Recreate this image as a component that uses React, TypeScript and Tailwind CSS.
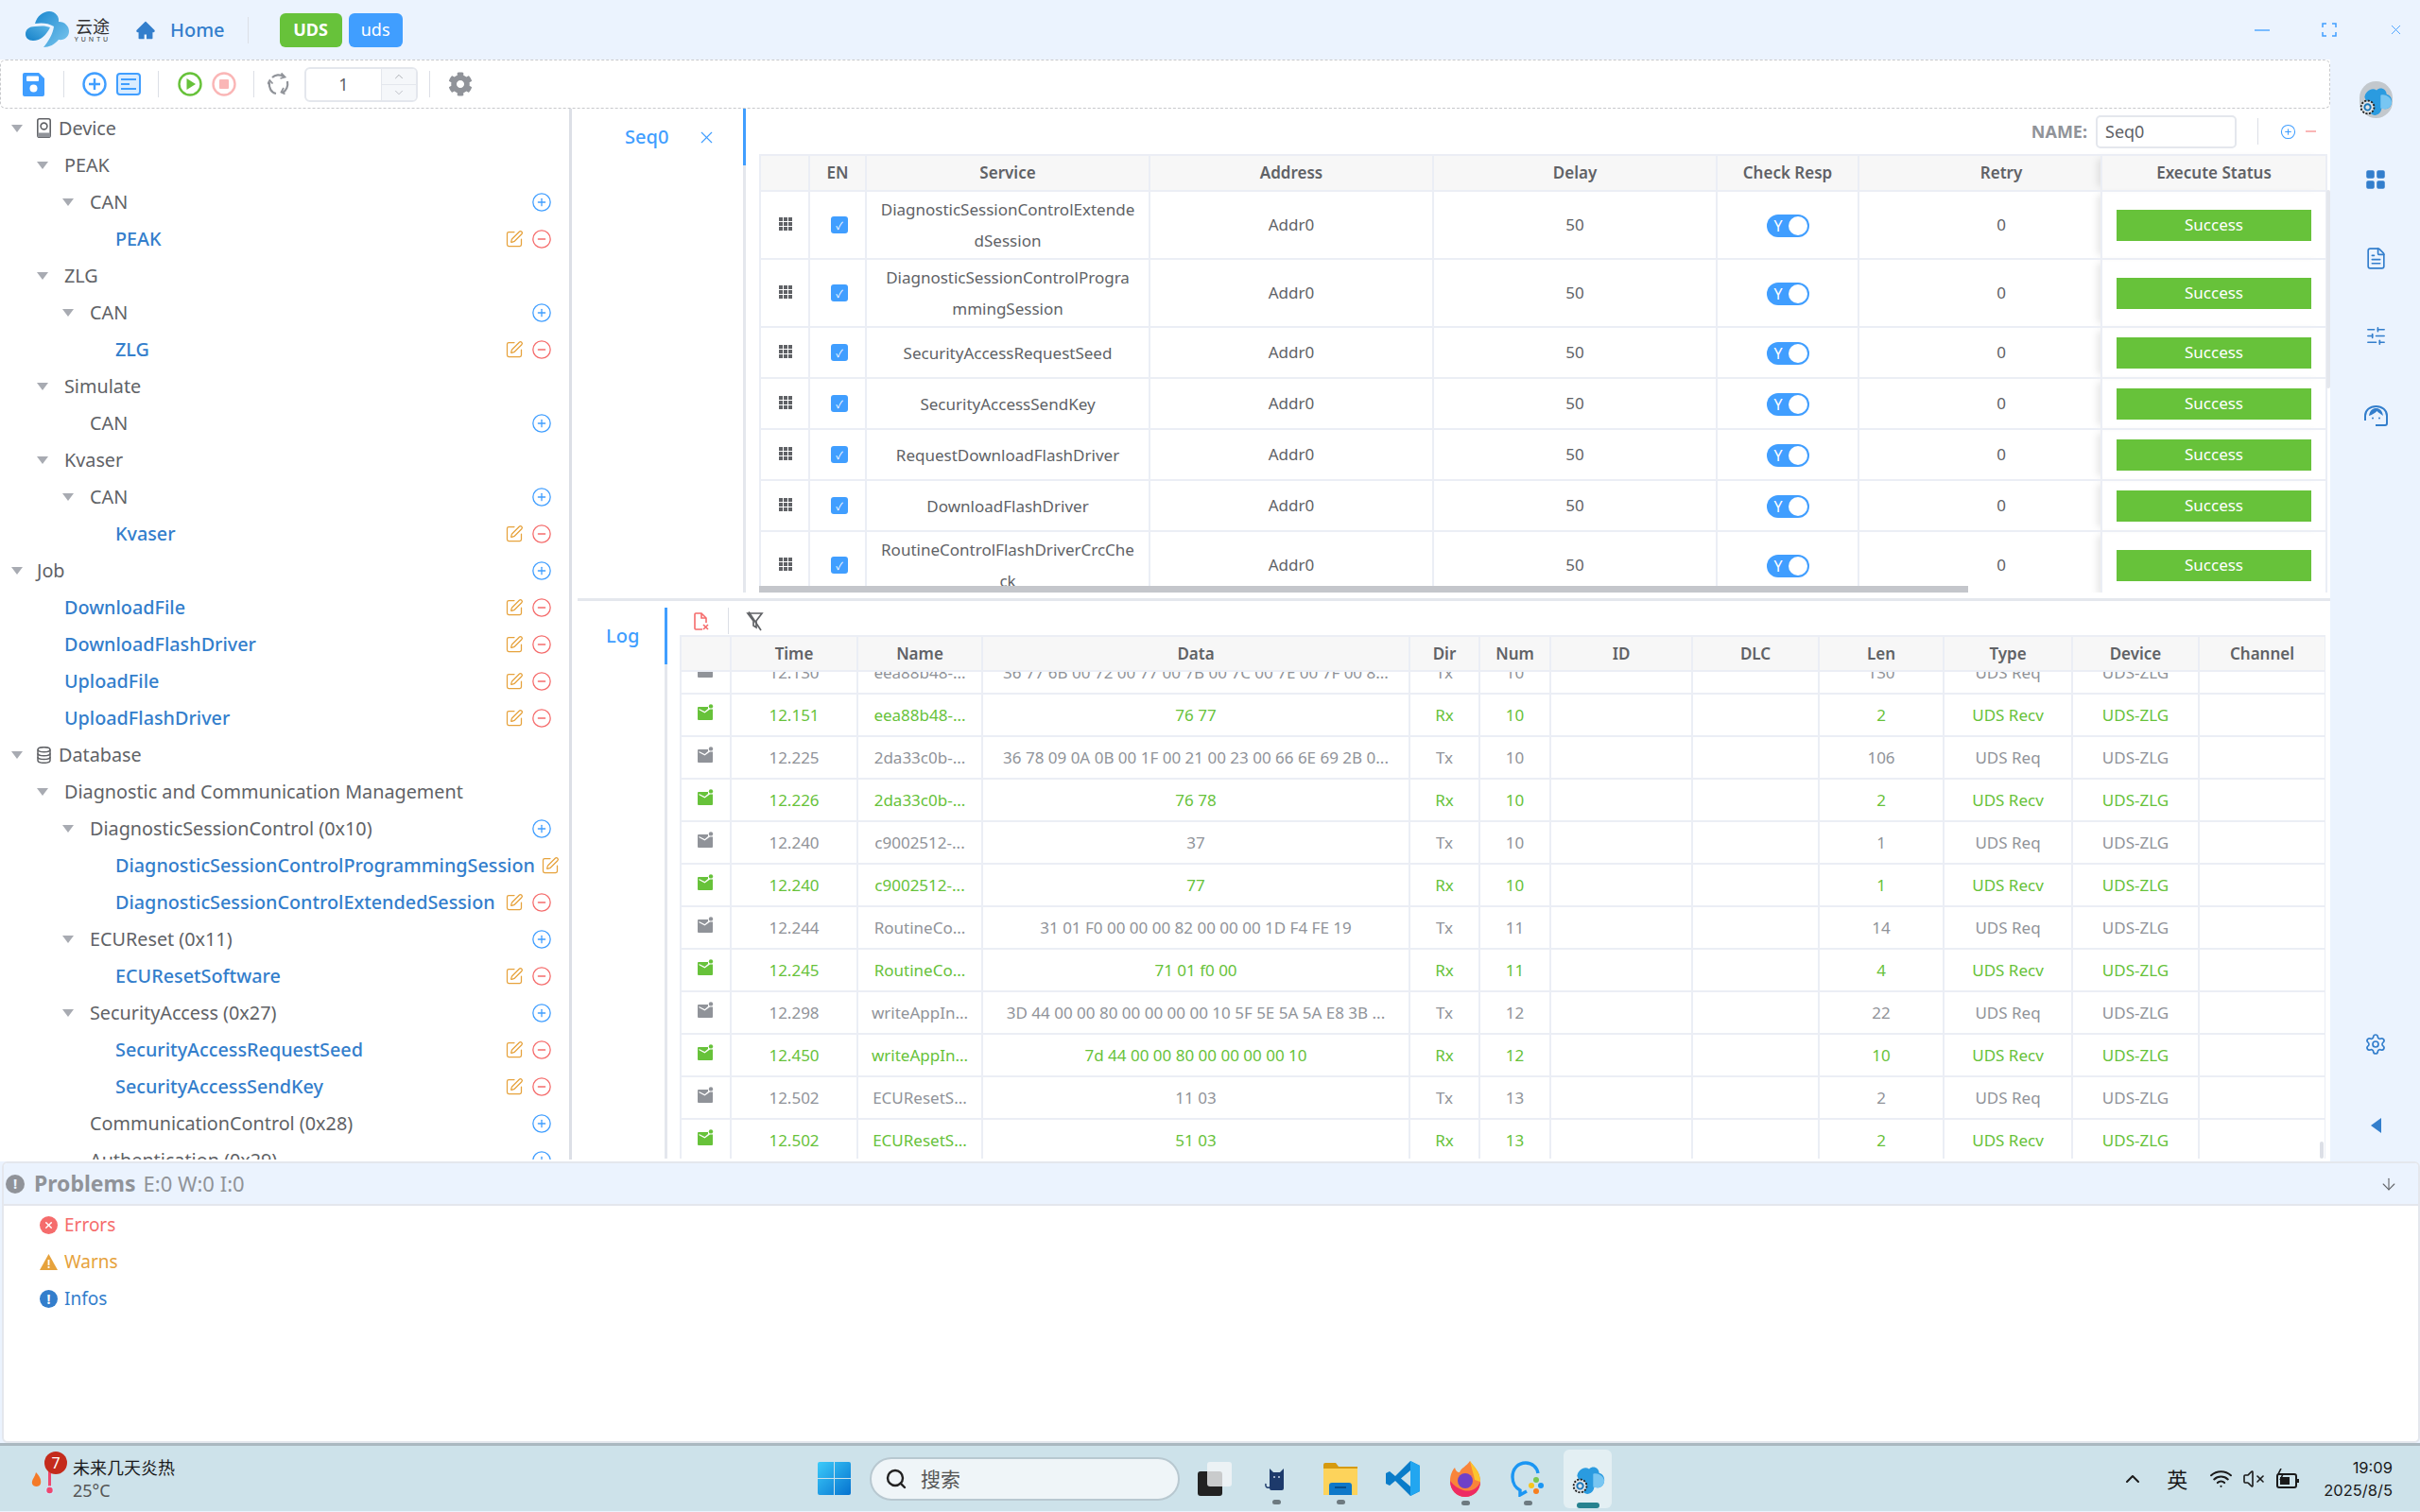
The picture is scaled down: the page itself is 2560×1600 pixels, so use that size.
import { CirclePlus, CircleMinus, SquarePen, X, ChevronUp, ChevronDown, ArrowDown, Settings, Search, Wifi, VolumeX, SlidersHorizontal, FileText, LayoutGrid } from "lucide-react";
import { FaCog } from "react-icons/fa";
import { AiFillHome } from "react-icons/ai";

type TreeRow = {
    label: string;
    level: number;
    arrow?: boolean;
    leaf?: boolean;
    add?: boolean;
    icon?: "device" | "db";
};

const treeRows: TreeRow[] = [
    { label: "Device", level: 0, arrow: true, icon: "device" },
    { label: "PEAK", level: 1, arrow: true },
    { label: "CAN", level: 2, arrow: true, add: true },
    { label: "PEAK", level: 3, leaf: true },
    { label: "ZLG", level: 1, arrow: true },
    { label: "CAN", level: 2, arrow: true, add: true },
    { label: "ZLG", level: 3, leaf: true },
    { label: "Simulate", level: 1, arrow: true },
    { label: "CAN", level: 2, add: true },
    { label: "Kvaser", level: 1, arrow: true },
    { label: "CAN", level: 2, arrow: true, add: true },
    { label: "Kvaser", level: 3, leaf: true },
    { label: "Job", level: 0, arrow: true, add: true },
    { label: "DownloadFile", level: 1, leaf: true },
    { label: "DownloadFlashDriver", level: 1, leaf: true },
    { label: "UploadFile", level: 1, leaf: true },
    { label: "UploadFlashDriver", level: 1, leaf: true },
    { label: "Database", level: 0, arrow: true, icon: "db" },
    { label: "Diagnostic and Communication Management", level: 1, arrow: true },
    { label: "DiagnosticSessionControl (0x10)", level: 2, arrow: true, add: true },
    { label: "DiagnosticSessionControlProgrammingSession", level: 3, leaf: true },
    { label: "DiagnosticSessionControlExtendedSession", level: 3, leaf: true },
    { label: "ECUReset (0x11)", level: 2, arrow: true, add: true },
    { label: "ECUResetSoftware", level: 3, leaf: true },
    { label: "SecurityAccess (0x27)", level: 2, arrow: true, add: true },
    { label: "SecurityAccessRequestSeed", level: 3, leaf: true },
    { label: "SecurityAccessSendKey", level: 3, leaf: true },
    { label: "CommunicationControl (0x28)", level: 2, add: true },
    { label: "Authentication (0x29)", level: 2, add: true },
];

const seqRows = [
    { name: "DiagnosticSessionControlExtendedSession", h: "h-[72px]" },
    { name: "DiagnosticSessionControlProgrammingSession", h: "h-[72px]" },
    { name: "SecurityAccessRequestSeed", h: "h-[54px]" },
    { name: "SecurityAccessSendKey", h: "h-[54px]" },
    { name: "RequestDownloadFlashDriver", h: "h-[54px]" },
    { name: "DownloadFlashDriver", h: "h-[54px]" },
    { name: "RoutineControlFlashDriverCrcCheck", h: "h-[72px]" },
];

const seqCols = [52, 60, 300, 300, 300, 150, 257, 238];
const logCols = [53, 134, 132, 452, 74, 75, 150, 134, 132, 136, 134, 134];
const logHead = ["", "Time", "Name", "Data", "Dir", "Num", "ID", "DLC", "Len", "Type", "Device", "Channel"];

const logRows = [
    ["12.130", "eea88b48-...", "36 77 6B 00 72 00 77 00 7B 00 7C 00 7E 00 7F 00 8...", "Tx", "10", "130"],
    ["12.151", "eea88b48-...", "76 77", "Rx", "10", "2"],
    ["12.225", "2da33c0b-...", "36 78 09 0A 0B 00 1F 00 21 00 23 00 66 6E 69 2B 0...", "Tx", "10", "106"],
    ["12.226", "2da33c0b-...", "76 78", "Rx", "10", "2"],
    ["12.240", "c9002512-...", "37", "Tx", "10", "1"],
    ["12.240", "c9002512-...", "77", "Rx", "10", "1"],
    ["12.244", "RoutineCo...", "31 01 F0 00 00 00 82 00 00 00 1D F4 FE 19", "Tx", "11", "14"],
    ["12.245", "RoutineCo...", "71 01 f0 00", "Rx", "11", "4"],
    ["12.298", "writeAppIn...", "3D 44 00 00 80 00 00 00 00 10 5F 5E 5A 5A E8 3B ...", "Tx", "12", "22"],
    ["12.450", "writeAppIn...", "7d 44 00 00 80 00 00 00 00 10", "Rx", "12", "10"],
    ["12.502", "ECUResetS...", "11 03", "Tx", "13", "2"],
    ["12.502", "ECUResetS...", "51 03", "Rx", "13", "2"],
];

function CloudLogo({ size = 46 }: { size?: number }) {
    return (
        <svg width={size} height={size * 0.83} viewBox="0 0 46 38" className="shrink-0">
            <defs>
                <linearGradient id="cl" x1="0" y1="0" x2="1" y2="1">
                    <stop offset="0" stopColor="#1b87cf" />
                    <stop offset="1" stopColor="#7cc8ef" />
                </linearGradient>
                <linearGradient id="cl2" x1="0" y1="1" x2="1" y2="0">
                    <stop offset="0" stopColor="#1480c8" />
                    <stop offset="1" stopColor="#5ab4e6" />
                </linearGradient>
            </defs>
            <path d="M10 13 C12 5 19 0 25 0 C32 0 36 6 35 11 C42 11 46 16 46 21 C46 27 41 31 35 30 C31 35 25 38 19 38 C24 32 29 24 30 16 C24 12 16 12 10 13 Z" fill="url(#cl)" />
            <path d="M0 24 C0 19 4 16 10 16 C16 15 22 15 26 17 C22 25 16 31 8 31 C3 31 0 28 0 24 Z" fill="url(#cl2)" />
        </svg>
    );
}

function AppIcon({ size = 34 }: { size?: number }) {
    return (
        <svg width={size} height={size} viewBox="0 0 34 34" className="shrink-0">
            <path d="M6 14 C7 8 13 4 18 7 C22 3 28 6 28 11 C32 12 34 16 33 20 C32 25 27 27 23 25 C23 30 17 34 13 31 Z" fill="#2a9be0" />
            <path d="M22 12 C27 10 34 15 33 20 C32 25 27 27 22 25 Z" fill="#78c6f2" />
            <circle cx="9" cy="24" r="6.5" fill="#dfe5ea" stroke="#222" strokeWidth="1.8" strokeDasharray="2 1.4" />
            <circle cx="9" cy="24" r="3" fill="none" stroke="#1976b8" strokeWidth="1.8" />
        </svg>
    );
}

function SolidEnvelope({ rx }: { rx: boolean }) {
    const fill = rx ? "#67c23a" : "#909399";
    return (
        <svg width="18" height="18" viewBox="0 0 18 18">
            <path d="M1 4 Q1 3 2 3 H12 V5 L8.5 8 L2.5 5 V6.2 L8.5 9.6 L14 5.6 H17 V16 Q17 17 16 17 H2 Q1 17 1 16 Z" fill={fill} />
            <circle cx="15" cy="2.4" r="2.2" fill={fill} />
        </svg>
    );
}

function DiskIcon() {
    return (
        <svg className="absolute left-[39px]" width="15" height="21" viewBox="0 0 15 21">
            <rect x="0.8" y="0.8" width="13.4" height="19.4" rx="2" fill="#fff" stroke="#606266" strokeWidth="1.6" />
            <circle cx="7.5" cy="8.5" r="3.4" fill="none" stroke="#606266" strokeWidth="1.6" />
            <rect x="0.8" y="15.5" width="13.4" height="4.7" fill="#909399" />
        </svg>
    );
}

function DbIcon() {
    return (
        <svg className="absolute left-[39px]" width="15" height="18" viewBox="0 0 15 18" fill="none" stroke="#606266" strokeWidth="1.5">
            <ellipse cx="7.5" cy="3.2" rx="6.5" ry="2.5" />
            <path d="M1 3.2 V14.8 C1 16.2 4 17.3 7.5 17.3 C11 17.3 14 16.2 14 14.8 V3.2" />
            <path d="M1 7.2 C1 8.6 4 9.7 7.5 9.7 C11 9.7 14 8.6 14 7.2 M1 11 C1 12.4 4 13.5 7.5 13.5 C11 13.5 14 12.4 14 11" />
        </svg>
    );
}

function TreeItem({ row }: { row: TreeRow }) {
    const textX = [39, 68, 95, 122][row.level];
    return (
        <div className="relative flex h-[39px] shrink-0 items-center pr-[16px]" style={{ paddingLeft: textX + (row.icon ? 23 : 0) }}>
            {row.arrow && (
                <span
                    className="absolute h-0 w-0 border-x-[6px] border-t-[8px] border-x-transparent border-t-[#a8abb2]"
                    style={{ left: 12 + row.level * 27 }}
                />
            )}
            {row.icon === "device" && <DiskIcon />}
            {row.icon === "db" && <DbIcon />}
            <span className={`shrink-0 whitespace-nowrap ${row.leaf ? "font-medium text-[#337ecc]" : "text-[#606266]"}`}>{row.label}</span>
            <span className="min-w-[6px] flex-1" />
            {row.add && <CirclePlus className="shrink-0 text-[#409eff]" size={22} strokeWidth={1.4} />}
            {row.leaf && (
                <span className="flex shrink-0 items-center gap-[8px]">
                    <SquarePen className="text-[#e6a23c]" size={20} strokeWidth={1.5} />
                    <CircleMinus className="text-[#f56c6c]" size={22} strokeWidth={1.4} />
                </span>
            )}
        </div>
    );
}

function Sep({ className = "" }: { className?: string }) {
    return <span className={`h-[28px] w-[1px] shrink-0 bg-[#dcdfe6] ${className}`} />;
}

function Toolbar() {
    return (
        <div className="flex h-[52px] w-[2465px] shrink-0 items-center rounded-[6px] border border-dashed border-[#c8c9cc] bg-white pl-[23px]">
            <svg width="23" height="25" viewBox="0 0 23 25">
                <path d="M2 0 H17 L23 6 V23 Q23 25 21 25 H2 Q0 25 0 23 V2 Q0 0 2 0 Z" fill="#409eff" />
                <rect x="4" y="3.5" width="13" height="5.5" rx="1" fill="#fff" />
                <circle cx="11.5" cy="16.5" r="4" fill="#fff" />
            </svg>
            <Sep className="ml-[20px]" />
            <svg className="ml-[19px]" width="26" height="28" viewBox="0 0 26 28" fill="none" stroke="#409eff" strokeWidth="2.4">
                <circle cx="13" cy="14" r="11.5" />
                <path d="M13 8 V20 M7 14 H19" />
            </svg>
            <svg className="ml-[10px]" width="26" height="24" viewBox="0 0 26 24">
                <rect x="1" y="1" width="24" height="22" rx="3" fill="#d9ecff" stroke="#409eff" strokeWidth="2" />
                <path d="M5 7 H21 M5 12 H14 M5 17 H21" stroke="#409eff" strokeWidth="2" />
            </svg>
            <Sep className="ml-[18px]" />
            <svg className="ml-[20px]" width="26" height="28" viewBox="0 0 26 28">
                <circle cx="13" cy="14" r="11.5" fill="none" stroke="#67c23a" strokeWidth="2.4" />
                <path d="M9.5 8 L19 14 L9.5 20 Z" fill="#67c23a" />
            </svg>
            <svg className="ml-[10px]" width="26" height="28" viewBox="0 0 26 28">
                <circle cx="13" cy="14" r="11.5" fill="none" stroke="#fab6b6" strokeWidth="2.4" />
                <rect x="8" y="9" width="10" height="10" rx="1" fill="#fab6b6" />
            </svg>
            <Sep className="ml-[18px]" />
            <svg className="ml-[14px]" width="23" height="26" viewBox="0 0 23 26" fill="none" stroke="#909399" strokeWidth="2.2">
                <path d="M5 6 C8 3 13 2.5 17 5" />
                <path d="M14.5 1.5 L18.5 5.5 L13.5 7" strokeWidth="1.8" />
                <path d="M21 10 C22 15 20 20 16 22" />
                <path d="M18.5 23.5 L14.5 21.5 L17 17" strokeWidth="1.8" />
                <path d="M9 23 C4 22 1 17 2 11" />
                <path d="M0 13 L2.3 9 L5.5 12.5" strokeWidth="1.8" />
            </svg>
            <div className="ml-[16px] flex h-[37px] w-[120px] overflow-hidden rounded-[6px] border-2 border-[#e4e7ed] text-[#606266]">
                <span className="flex flex-1 items-center justify-center text-[18px]">1</span>
                <div className="flex w-[37px] flex-col border-l border-[#e4e7ed] bg-[#f5f7fa] text-[#909399]">
                    <span className="flex flex-1 items-center justify-center border-b border-[#e4e7ed]"><ChevronUp size={14} strokeWidth={1.2} /></span>
                    <span className="flex flex-1 items-center justify-center"><ChevronDown size={14} strokeWidth={1.2} className="text-[#a8abb2]" /></span>
                </div>
            </div>
            <Sep className="ml-[12px]" />
            <FaCog className="ml-[19px] text-[#909399]" size={26} />
        </div>
    );
}

function Toggle() {
    return (
        <span className="inline-flex h-[24px] w-[45px] items-center justify-between rounded-full bg-[#409eff] pl-[8px] pr-[2px] align-middle text-[16px] leading-none text-white">
            Y
            <span className="h-[20px] w-[20px] rounded-full bg-white" />
        </span>
    );
}

function Colgroup({ cols }: { cols: number[] }) {
    return (
        <colgroup>
            {cols.map((w, i) => (
                <col key={i} style={{ width: w }} />
            ))}
        </colgroup>
    );
}

function SeqPanel() {
    return (
        <div className="flex h-[512px] shrink-0">
            <div className="flex w-[184px] shrink-0 flex-col">
                <div className="flex h-[60px] items-center border-r-[3px] border-[#409eff] pl-[56px] text-[20px] text-[#409eff]">
                    <span className="font-medium">Seq0</span>
                    <X className="ml-[30px]" size={21} strokeWidth={1.3} />
                </div>
                <div className="flex-1 border-r-[3px] border-[#e4e7ed]" />
            </div>
            <div className="relative flex-1 overflow-hidden pl-[14px]">
                <div className="flex h-[48px] items-center justify-end pr-[15px]">
                    <span className="mr-[9px] text-[18px] font-bold text-[#909399]">NAME:</span>
                    <div className="flex h-[35px] w-[149px] items-center rounded-[5px] border-2 border-[#e4e7ed] pl-[8px] text-[18px] text-[#606266]">Seq0</div>
                    <Sep className="ml-[22px] h-[26px]" />
                    <CirclePlus className="ml-[23px] text-[#409eff]" size={17} strokeWidth={1.5} />
                    <span className="ml-[10px] h-[2px] w-[11px] bg-[#fab6b6]" />
                </div>
                <table className="w-[1657px] table-fixed border-collapse text-center text-[17px] text-[#606266]">
                    <Colgroup cols={seqCols} />
                    <thead>
                        <tr className="h-[38px] bg-[#f7f7f7]">
                            {["", "EN", "Service", "Address", "Delay", "Check Resp"].map((h, i) => (
                                <th key={i} className="border-2 border-[#ebeef5] font-semibold">{h}</th>
                            ))}
                            <th className="border-2 border-[#ebeef5] pl-[45px] font-semibold">Retry</th>
                            <th className="border-2 border-[#ebeef5] font-semibold shadow-[-8px_0_8px_-4px_rgba(0,0,0,0.1)]">Execute Status</th>
                        </tr>
                    </thead>
                    <tbody>
                        {seqRows.map((r) => (
                            <tr key={r.name} className={r.h}>
                                <td className="border-2 border-[#ebeef5]">
                                    <span className="grid h-[14px] w-[14px] -translate-y-[1px] translate-x-[19px] grid-cols-3 gap-[1px]">
                                        {Array.from({ length: 9 }).map((_, i) => (
                                            <span key={i} className="bg-[#606266]" />
                                        ))}
                                    </span>
                                </td>
                                <td className="border-2 border-[#ebeef5]">
                                    <span className="mx-auto flex h-[18px] w-[18px] translate-x-[2px] items-center justify-center rounded-[3px] bg-[#409eff] text-[11px] leading-none text-white">✓</span>
                                </td>
                                <td className="border-2 border-[#ebeef5] px-[14px] leading-[33px] break-all">{r.name}</td>
                                <td className="border-2 border-[#ebeef5]">Addr0</td>
                                <td className="border-2 border-[#ebeef5]">50</td>
                                <td className="border-2 border-[#ebeef5]"><Toggle /></td>
                                <td className="border-2 border-[#ebeef5] pl-[45px]">0</td>
                                <td className="border-2 border-[#ebeef5] px-[15px] shadow-[-8px_0_8px_-4px_rgba(0,0,0,0.1)]">
                                    <div className="flex h-[33px] items-center justify-center bg-[#67c23a] text-white">Success</div>
                                </td>
                            </tr>
                        ))}
                    </tbody>
                </table>
                <div className="absolute left-[14px] top-[505px] h-[7px] w-[1279px] bg-[#c4c6cb]" />
                <div className="absolute right-0 top-[86px] h-[210px] w-[4px] rounded-full bg-[#e4e7ed]" />
            </div>
        </div>
    );
}

function LogPanel() {
    return (
        <div className="flex h-[590px] shrink-0 pl-[6px]">
            <div className="flex w-[95px] shrink-0 flex-col pt-[7px]">
                <div className="flex h-[60px] items-center border-r-[3px] border-[#409eff] pl-[30px] text-[20px] font-medium text-[#409eff]">Log</div>
                <div className="flex-1 border-r-[3px] border-[#e4e7ed]" />
            </div>
            <div className="relative flex w-[1754px] flex-col overflow-hidden pl-[13px]">
                <div className="flex h-[36px] shrink-0 items-center pl-[15px] pt-[6px]">
                    <svg width="16" height="19" viewBox="0 0 16 19" fill="none" stroke="#f56c6c" strokeWidth="1.6">
                        <path d="M9 18 H2 Q1 18 1 17 V2 Q1 1 2 1 H8 L13 6 V11" />
                        <path d="M8 1 V6 H13" />
                        <path d="M10 13 L15 18 M15 13 L10 18" />
                    </svg>
                    <Sep className="ml-[20px] h-[19px]" />
                    <svg className="ml-[18px]" width="19" height="21" viewBox="0 0 19 21" fill="none" stroke="#606266" strokeWidth="1.7">
                        <path d="M2 2 H17 L11 10 V17 L8 15 V10 Z" />
                        <path d="M3 0.5 L16 20" />
                    </svg>
                </div>
                <table className="w-[1740px] shrink-0 table-fixed border-collapse text-center text-[17px] text-[#606266]">
                    <Colgroup cols={logCols} />
                    <thead>
                        <tr className="h-[37px] bg-[#f7f7f7]">
                            {logHead.map((h, i) => (
                                <th key={i} className="border-2 border-[#ebeef5] font-semibold">{h}</th>
                            ))}
                        </tr>
                    </thead>
                </table>
                <div className="flex-1 overflow-hidden">
                    <table className="-mt-[23px] w-[1740px] table-fixed border-collapse text-center text-[17px]">
                        <Colgroup cols={logCols} />
                        <tbody>
                            {logRows.map((r, i) => {
                                const rx = r[3] === "Rx";
                                return (
                                    <tr key={i} className={`h-[45px] ${rx ? "text-[#67c23a]" : "text-[#909399]"}`}>
                                        <td className="border-2 border-[#ebeef5]">
                                            <span className="flex -translate-x-[1px] -translate-y-[3px] justify-center"><SolidEnvelope rx={rx} /></span>
                                        </td>
                                        {r.slice(0, 5).map((c, j) => (
                                            <td key={j} className="whitespace-nowrap border-2 border-[#ebeef5]">{c}</td>
                                        ))}
                                        <td className="border-2 border-[#ebeef5]" />
                                        <td className="border-2 border-[#ebeef5]" />
                                        <td className="border-2 border-[#ebeef5]">{r[5]}</td>
                                        <td className="whitespace-nowrap border-2 border-[#ebeef5]">{rx ? "UDS Recv" : "UDS Req"}</td>
                                        <td className="border-2 border-[#ebeef5]">UDS-ZLG</td>
                                        <td className="border-2 border-[#ebeef5]" />
                                    </tr>
                                );
                            })}
                        </tbody>
                    </table>
                </div>
                <div className="absolute bottom-0 right-[2px] h-[18px] w-[4px] rounded-full bg-[#dcdfe6]" />
            </div>
        </div>
    );
}

function SideBar() {
    return (
        <div className="relative flex w-[95px] shrink-0 flex-col items-center pl-[1px] text-[#337ecc]">
            <span className="mt-[23px] flex h-[39px] w-[35px] items-center justify-center rounded-full bg-[#c3c8cd]"><AppIcon size={36} /></span>
            <LayoutGrid className="mt-[53px]" size={24} fill="#337ecc" strokeWidth={1.5} />
            <FileText className="mt-[59px]" size={25} strokeWidth={1.6} />
            <SlidersHorizontal className="mt-[58px]" size={23} strokeWidth={1.7} />
            <svg className="mt-[62px]" width="25" height="23" viewBox="0 0 25 23" fill="none" stroke="#337ecc" strokeWidth="2">
                <path d="M1 16 V11 C1 5 6 1 12.5 1 C19 1 24 5 24 11 V16" />
                <path d="M24 15 V19 Q24 21 22 21 H12" />
                <path d="M5 11 C6 5 9 3 12.5 3 C16 3 19 5 20 11 C17 9 15 7.5 13.5 6 C11 8.5 8 10 5 11 Z" fill="#337ecc" stroke="none" />
                <circle cx="9" cy="13.5" r="1" fill="#337ecc" stroke="none" />
                <circle cx="16" cy="13.5" r="1" fill="#337ecc" stroke="none" />
            </svg>
            <span className="flex-1" />
            <Settings size={24} strokeWidth={1.7} />
            <span className="mb-[30px] mt-[66px] h-0 w-0 border-y-[8px] border-r-[11px] border-y-transparent border-r-[#337ecc]" />
        </div>
    );
}

function ProblemsPanel() {
    return (
        <div className="ml-[2px] flex h-[298px] shrink-0 flex-col overflow-hidden rounded-[6px] border-2 border-[#e4e7ed] bg-white">
            <div className="flex h-[45px] shrink-0 items-center border-b-2 border-[#e4e7ed] bg-[#ebf3fe] pl-[2px] pr-[21px] text-[#909399]">
                <span className="flex h-[20px] w-[20px] items-center justify-center rounded-full bg-[#909399] text-[15px] font-bold leading-none text-[#ebf3fe]">!</span>
                <span className="ml-[10px] text-[23px] font-bold">Problems</span>
                <span className="ml-[8px] text-[22px]">E:0 W:0 I:0</span>
                <span className="flex-1" />
                <ArrowDown className="text-[#606266]" size={20} strokeWidth={1.3} />
            </div>
            <div className="pl-[38px] pt-[1px] text-[19px] leading-[39px]">
                <div className="flex items-center text-[#f56c6c]">
                    <span className="flex h-[19px] w-[19px] items-center justify-center rounded-full bg-[#f56c6c] text-white"><X size={11} strokeWidth={3} /></span>
                    <span className="ml-[7px]">Errors</span>
                </div>
                <div className="flex items-center text-[#e6a23c]">
                    <svg width="19" height="17" viewBox="0 0 19 17">
                        <path d="M9.5 0 L19 17 H0 Z" fill="#e6a23c" />
                        <rect x="8.6" y="6" width="1.8" height="6" fill="#fff" />
                        <rect x="8.6" y="13" width="1.8" height="2" fill="#fff" />
                    </svg>
                    <span className="ml-[7px]">Warns</span>
                </div>
                <div className="flex items-center text-[#337ecc]">
                    <span className="flex h-[19px] w-[19px] items-center justify-center rounded-full bg-[#337ecc] text-[14px] font-bold leading-none text-white">!</span>
                    <span className="ml-[7px]">Infos</span>
                </div>
            </div>
        </div>
    );
}

function Taskbar() {
    return (
        <div className="flex h-[72px] shrink-0 items-center border-t-[3px] border-[#aab8c0] bg-[#cde2ea] pl-[33px] pr-[29px] text-[#1a1a1a]">
            <div className="relative flex h-full w-[832px] shrink-0 items-center">
                <svg className="mt-[6px]" width="30" height="40" viewBox="0 0 30 40">
                    <path d="M5 10 C9 14 11 18 10 22 C9 26 2 26 1 22 C0 18 4 15 5 10 Z" fill="#f47a28" />
                    <rect x="18" y="4" width="3" height="24" rx="1.5" fill="#ef476f" />
                    <circle cx="19.5" cy="29" r="4" fill="#ef476f" stroke="#cfe6f6" strokeWidth="1.6" />
                </svg>
                <span className="absolute left-[14px] top-[6px] flex h-[24px] w-[24px] items-center justify-center rounded-full bg-[#c42b1c] text-[16px] leading-none text-white">7</span>
                <div className="ml-[14px] flex flex-col text-[18px] leading-[25px]">
                    <span className="font-['Noto_Sans_CJK_SC',sans-serif]">未来几天炎热</span>
                    <span className="text-[#555]">25°C</span>
                </div>
            </div>
            <svg width="35" height="35" viewBox="0 0 35 35" className="shrink-0">
                <defs>
                    <linearGradient id="win" x1="0" y1="0" x2="1" y2="1">
                        <stop offset="0" stopColor="#3ccbfa" />
                        <stop offset="1" stopColor="#0572cf" />
                    </linearGradient>
                </defs>
                <path d="M0 2 Q0 0 2 0 H17 V17 H0 Z M18 0 H33 Q35 0 35 2 V17 H18 Z M0 18 H17 V35 H2 Q0 35 0 33 Z M18 18 H35 V33 Q35 35 33 35 H18 Z" fill="url(#win)" />
            </svg>
            <div className="ml-[20px] flex h-[46px] w-[328px] shrink-0 items-center rounded-full border-2 border-[#b8c8d0] bg-[#eff5f8] pl-[14px] text-[21px] text-[#555]">
                <Search className="text-[#222]" size={24} strokeWidth={2.4} />
                <span className="ml-[14px] font-['Noto_Sans_CJK_SC',sans-serif]">搜索</span>
            </div>
            <div className="ml-[19px] flex h-full shrink-0 items-center">
                <div className="relative h-[36px] w-[36px]">
                    <span className="absolute bottom-0 left-0 h-[26px] w-[26px] rounded-[3px] bg-[#222]" />
                    <span className="absolute right-0 top-0 h-[26px] w-[26px] rounded-[3px] bg-[#f4f6f7]/80" />
                </div>
                <div className="relative ml-[34px] flex flex-col items-center">
                    <svg width="26" height="26" viewBox="0 0 26 26">
                        <path d="M6 2 L10 6 H17 L21 2 V23 Q21 25 19 25 H8 Q6 25 6 23 Z" fill="#1d3a6b" />
                        <path d="M6 22 Q1 23 2 18" stroke="#1d3a6b" strokeWidth="1.5" fill="none" />
                        <circle cx="11" cy="11" r="1" fill="#c9d6e8" /><circle cx="16" cy="11" r="1" fill="#c9d6e8" />
                    </svg>
                    <span className="absolute -bottom-[14px] h-[5px] w-[9px] rounded-full bg-[#6d7a80]" />
                </div>
                <div className="relative ml-[37px] flex flex-col items-center">
                    <svg width="36" height="34" viewBox="0 0 36 34">
                        <path d="M0 2 Q0 0 2 0 H13 L16 4 H36 V33 H0 Z" fill="#d69a10" />
                        <rect x="0" y="6" width="36" height="28" fill="#fdd35b" />
                        <path d="M6 34 V24 Q6 21 9 21 H27 Q30 21 30 24 V34 Z" fill="#0f78c9" />
                        <rect x="12" y="25" width="12" height="2" fill="#074f8d" />
                    </svg>
                    <span className="absolute -bottom-[10px] h-[5px] w-[9px] rounded-full bg-[#6d7a80]" />
                </div>
                <svg className="ml-[30px]" width="36" height="37" viewBox="0 0 36 37">
                    <path d="M26 0 L36 5 V32 L26 37 L10 21 L4 26 L0 24 V13 L4 11 L10 16 Z M26 10 L16 18.5 L26 27 Z" fill="#0a7cc9" fillRule="evenodd" />
                    <path d="M26 0 L36 5 V32 L26 37 Z" fill="#22a6f0" />
                </svg>
                <div className="relative ml-[31px] flex flex-col items-center">
                    <svg width="34" height="38" viewBox="0 0 34 38">
                        <path d="M22 0 C26 6 33 11 33 22 C33 31 26 38 17 38 C8 38 1 31 1 21 C1 14 4 9 6 7 C7 11 9 12 11 12 C13 7 18 6 22 0 Z" fill="#f9843a" />
                        <path d="M22 0 C26 6 33 11 33 22 L27 20 C26 14 24 9 22 0 Z" fill="#fcc52d" />
                        <path d="M1 21 C1 31 8 38 17 38 C26 38 33 31 33 22 C30 30 22 33 15 31 C9 29 5 26 1 21 Z" fill="#ee2b63" />
                        <circle cx="17" cy="21" r="8" fill="#6f40c8" />
                    </svg>
                    <span className="absolute -bottom-[9px] h-[5px] w-[9px] rounded-full bg-[#6d7a80]" />
                </div>
                <div className="relative ml-[30px] flex flex-col items-center">
                    <svg width="38" height="38" viewBox="0 0 38 38">
                        <path d="M17 2 C9 2 3 8 3 17 C3 24 7 29 11 31 L11 36 L18 32" fill="none" stroke="#1b96f3" strokeWidth="3.4" />
                        <path d="M17 2 C24 2 29 7 30 13" fill="none" stroke="#1b96f3" strokeWidth="3.4" />
                        <circle cx="28" cy="20" r="3" fill="#7ac74f" /><circle cx="23" cy="26" r="3" fill="#f7c61d" />
                        <circle cx="33" cy="26" r="3" fill="#1b96f3" /><circle cx="28" cy="32" r="3" fill="#f77f1f" />
                    </svg>
                    <span className="absolute -bottom-[9px] h-[5px] w-[9px] rounded-full bg-[#6d7a80]" />
                </div>
                <div className="relative ml-[19px] flex h-[62px] w-[51px] items-center justify-center rounded-[6px] bg-[#e3eff3]">
                    <AppIcon size={36} />
                    <span className="absolute bottom-0 h-[6px] w-[24px] rounded-full bg-[#26828f]" />
                </div>
            </div>
            <span className="flex-1" />
            <div className="flex shrink-0 items-center">
                <ChevronUp size={24} strokeWidth={2} />
                <span className="ml-[24px] font-['Noto_Sans_CJK_SC',sans-serif] text-[22px]">英</span>
                <Wifi className="ml-[23px]" size={25} strokeWidth={2} />
                <VolumeX className="ml-[10px]" size={24} strokeWidth={1.6} />
                <svg className="ml-[11px]" width="26" height="22" viewBox="0 0 26 22" fill="none" stroke="#1a1a1a" strokeWidth="2">
                    <rect x="2" y="6" width="20" height="14" rx="2" />
                    <rect x="5" y="9" width="10" height="8" fill="#1a1a1a" stroke="none" />
                    <path d="M24 11 V15" />
                    <path d="M6 0 L3 6 H8 L5 12" strokeWidth="1.6" />
                </svg>
                <div className="ml-[25px] flex flex-col items-end font-['Inter',sans-serif] text-[16.5px] leading-[24px]">
                    <span>19:09</span>
                    <span>2025/8/5</span>
                </div>
            </div>
        </div>
    );
}

export default function App() {
    return (
        <div className="flex h-[1600px] w-[2560px] flex-col overflow-hidden bg-[#ebf3fe] font-['Noto_Sans','Noto_Sans_CJK_SC',sans-serif] text-[19.8px]">
            {/* Title bar */}
            <div className="flex h-[63px] shrink-0 items-center pl-[27px]">
                <CloudLogo />
                <div className="ml-[5px] flex w-[40px] flex-col items-center leading-none text-[#333]">
                    <span className="text-[18px] leading-[19px]">云途</span>
                    <span className="text-[7px] tracking-[3px]">YUNTU</span>
                </div>
                <AiFillHome className="ml-[25px] text-[#337ecc]" size={22} />
                <span className="ml-[15px] text-[20px] font-medium text-[#337ecc]">Home</span>
                <Sep className="ml-[24px]" />
                <span className="ml-[33px] flex h-[36px] w-[66px] items-center justify-center rounded-[6px] bg-[#67c23a] text-[18px] font-bold text-white">UDS</span>
                <span className="ml-[7px] flex h-[36px] w-[57px] items-center justify-center rounded-[6px] bg-[#409eff] text-[18px] text-white">uds</span>
                <span className="flex-1" />
                <span className="h-[2px] w-[16px] bg-[#79bbff]" />
                <svg className="ml-[55px]" width="16" height="15" viewBox="0 0 16 15" fill="none" stroke="#409eff" strokeWidth="1.5">
                    <path d="M1 5 V1 H5 M11 1 H15 V5 M15 10 V14 H11 M5 14 H1 V10" />
                </svg>
                <X className="ml-[54px] mr-[17px] text-[#409eff]" size={17} strokeWidth={1.3} />
            </div>

            <div className="flex h-[1166px] shrink-0">
                <div className="flex w-[2465px] shrink-0 flex-col bg-white">
                    <Toolbar />
                    <div className="flex min-h-0 flex-1">
                        {/* Tree */}
                        <div className="mr-[2px] flex h-[1112px] w-[600px] shrink-0 flex-col overflow-hidden pt-[1px]">
                            {treeRows.map((row, i) => (
                                <TreeItem key={i} row={row} />
                            ))}
                        </div>
                        <div className="h-[1112px] w-[3px] shrink-0 bg-[#dcdfe6]" />
                        {/* Sequence and log */}
                        <div className="flex min-w-0 flex-1 flex-col">
                            <SeqPanel />
                            <div className="ml-[6px] mt-[6px] h-[3px] shrink-0 bg-[#e4e7ed]" />
                            <LogPanel />
                        </div>
                    </div>
                </div>
                <SideBar />
            </div>

            <ProblemsPanel />
            <Taskbar />
        </div>
    );
}
